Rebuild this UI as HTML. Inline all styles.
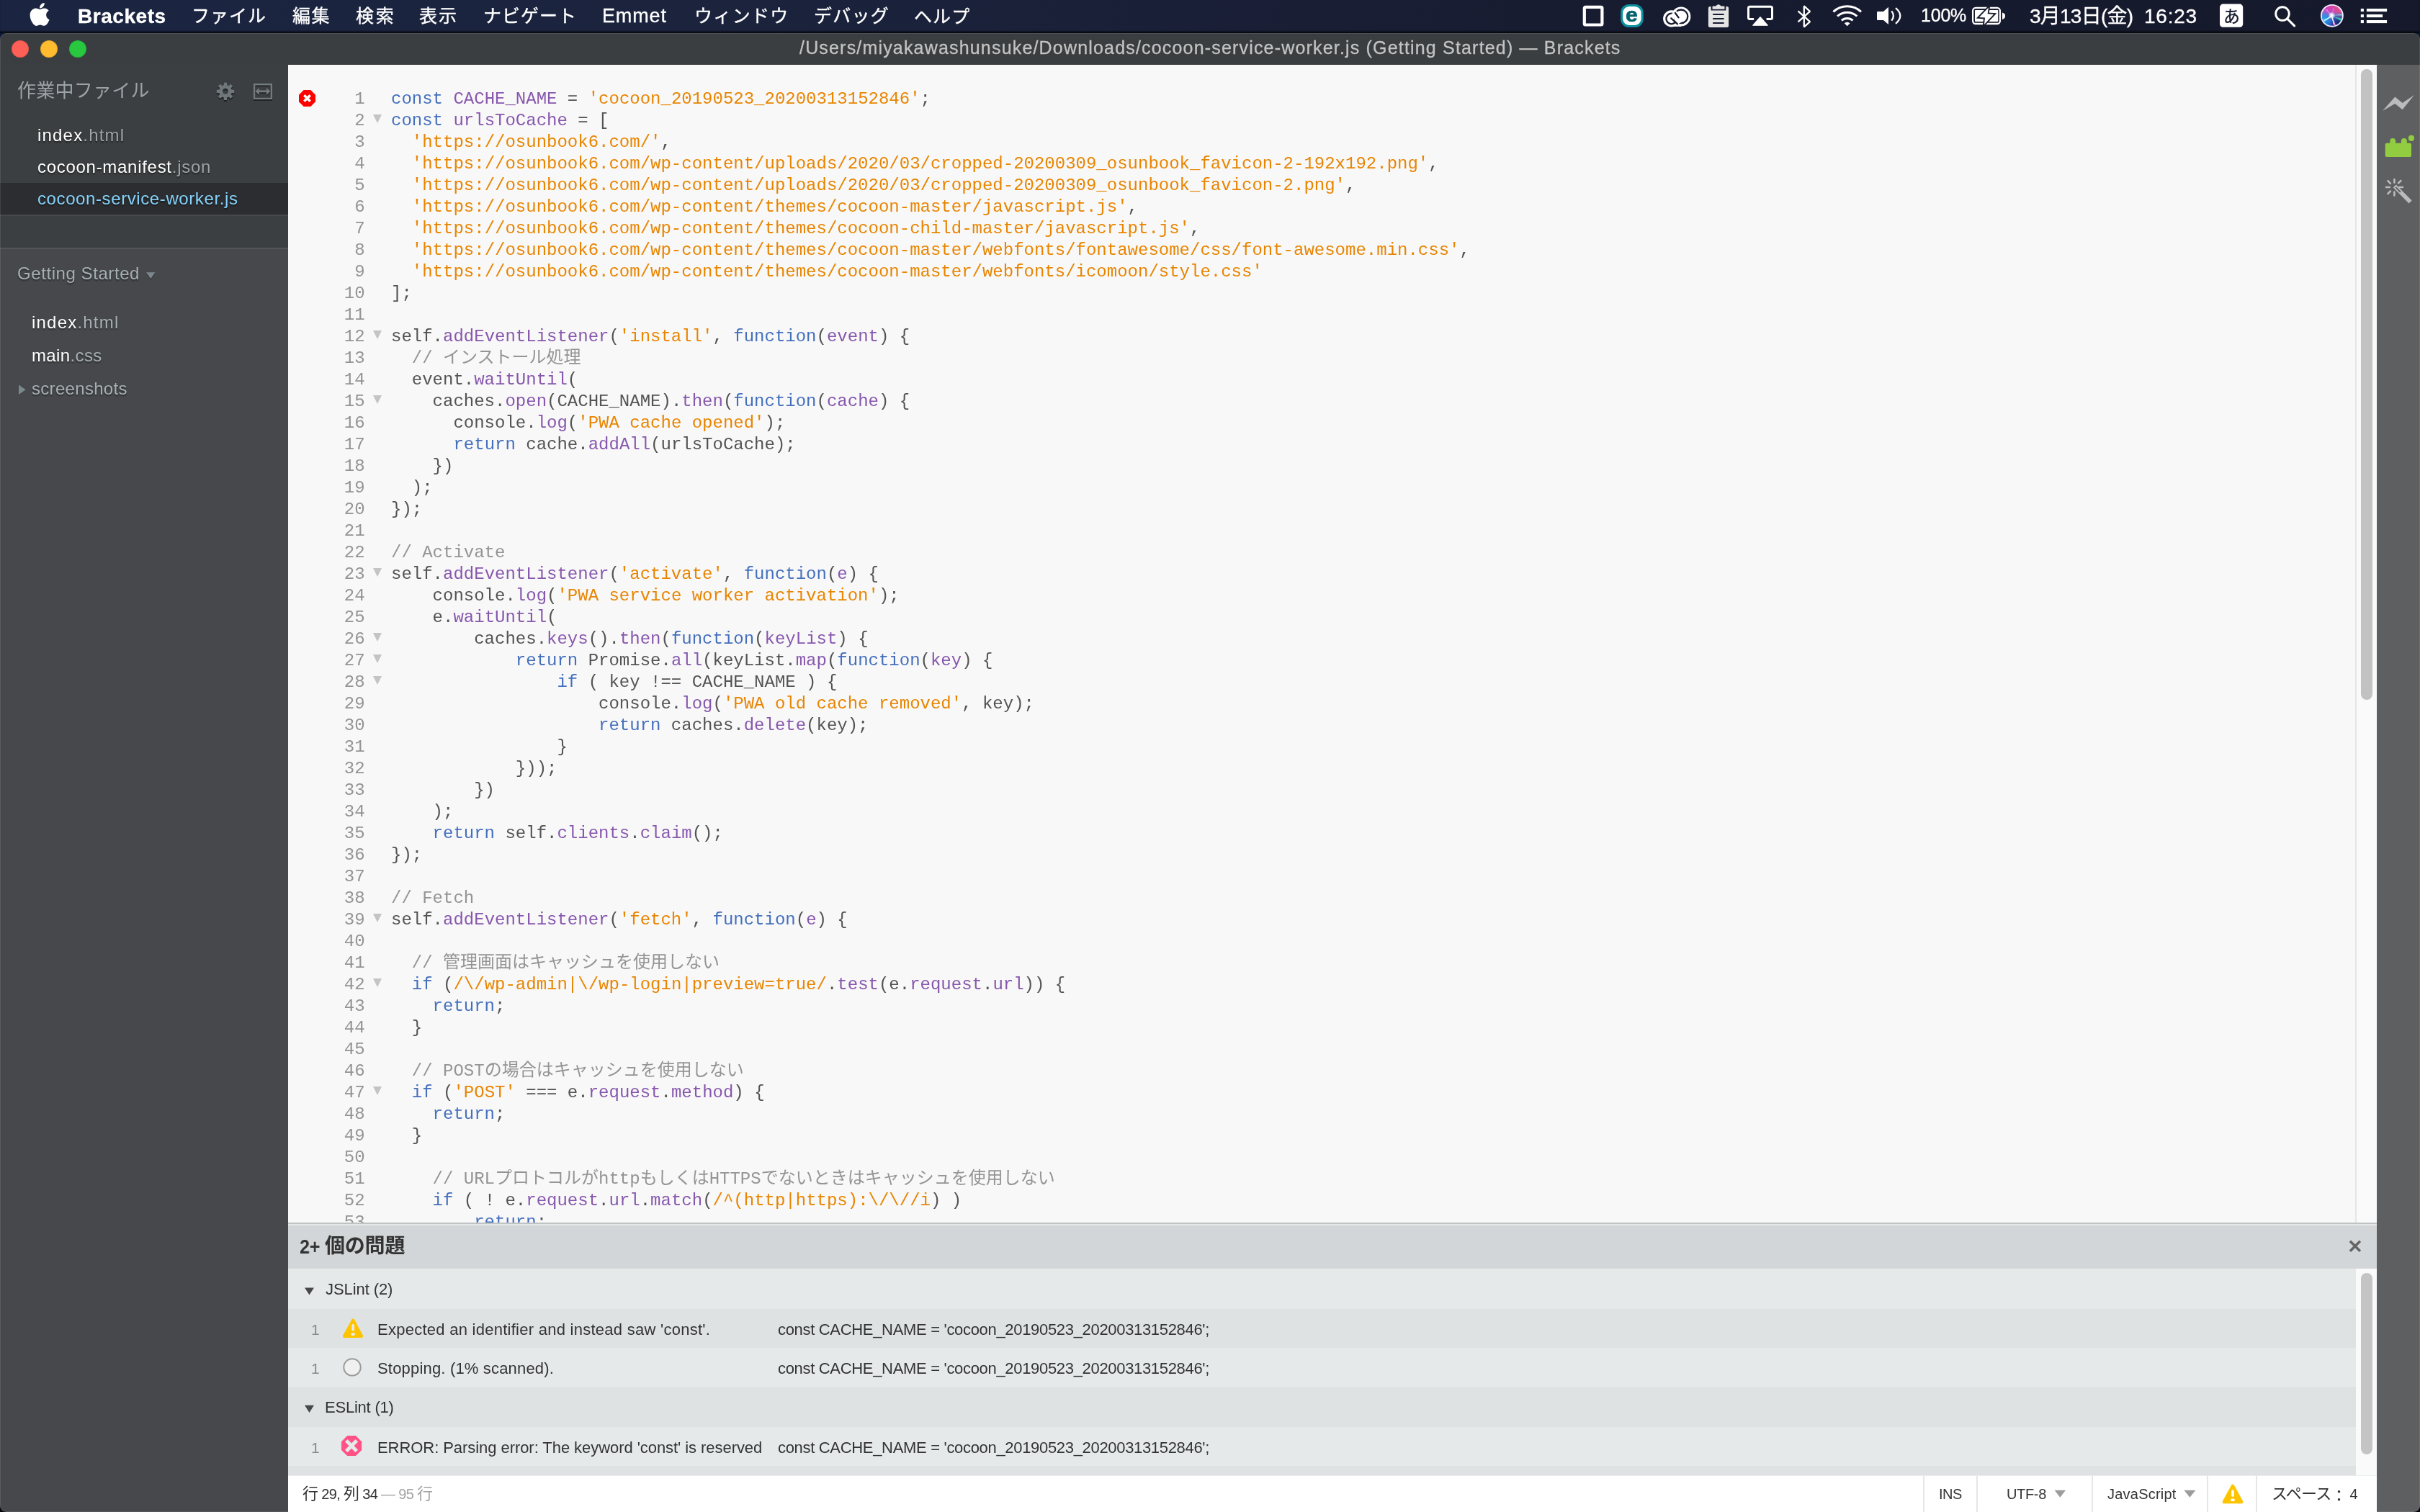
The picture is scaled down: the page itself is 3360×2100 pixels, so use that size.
<!DOCTYPE html>
<html lang="ja">
<head>
<meta charset="utf-8">
<title>Brackets</title>
<style>
html,body{margin:0;padding:0;}
body{width:3360px;height:2100px;overflow:hidden;position:relative;background:linear-gradient(to bottom,#0b1a3a 0%,#0a1630 40%,#05070c 100%);font-family:"Liberation Sans","Noto Sans CJK JP",sans-serif;}
.abs,#win>div,#win>svg,#menubar>svg{position:absolute;}
.t{position:absolute;white-space:pre;line-height:1;}
.t,.code{will-change:transform;}
#menubar{position:absolute;left:0;top:0;width:3360px;height:45px;box-shadow:inset 0 -2px 1.5px rgba(0,0,0,.45);background:linear-gradient(to right,#1b2541 0%,#1b233d 30%,#181c31 65%,#15192b 100%);}
#menuline{position:absolute;left:0;top:45px;width:3360px;height:1px;background:#05070d;}
#win{position:absolute;left:0;top:0;width:3360px;height:2100px;clip-path:inset(46px 0px 0px 0px round 9px);background:#3b3e41;}
#titlebar{left:0;top:46px;width:3360px;height:44px;background:#3b3e41;}
#ws{left:0;top:90px;width:400px;height:254px;background:#3c3f41;}
#wssel{left:0;top:254px;width:400px;height:44px;background:#2c2d30;}
#proj{left:0;top:344px;width:400px;height:1756px;background:#47484b;border-top:2px solid #525457;box-sizing:border-box;}
#editor{left:400px;top:90px;width:2900px;height:1608px;background:#f8f8f8;overflow:hidden;}
#toolbar{left:3300px;top:90px;width:60px;height:2010px;background:#5d5f60;}
#edborder{left:400px;top:1698px;width:2900px;height:2px;background:#c0c3c4;}
#edborder2{left:400px;top:1700px;width:2900px;height:2px;background:#e6e8e8;}
#phead{left:400px;top:1702px;width:2900px;height:60px;background:#d3d6d8;}
#status{left:400px;top:2049px;width:2900px;height:51px;background:#ffffff;}
.row{left:400px;width:2871px;}
.code{font-family:"Liberation Mono","Noto Sans CJK JP",monospace;font-size:24px;line-height:30px;white-space:pre;color:#535353;}
.k{color:#446fbd}.d{color:#8757ad}.s{color:#e88501}.c{color:#949494}
#winborder{left:0;top:46px;width:3360px;height:2054px;border-radius:9px;box-shadow:inset 0 0 0 1px rgba(255,255,255,.10);}
</style>
</head>
<body>
<div id="menubar">
<svg width="3360" height="46" viewBox="0 0 3360 46" style="left:0;top:0" fill="none">
<!-- apple -->
<g transform="translate(38.3,3.1) scale(0.1975)" fill="#fff"><path d="M150.37 130.25c-2.45 5.66-5.35 10.87-8.71 15.66-4.58 6.53-8.33 11.05-11.22 13.56-4.48 4.12-9.28 6.23-14.42 6.35-3.69 0-8.14-1.05-13.32-3.18-5.197-2.12-9.973-3.17-14.34-3.17-4.58 0-9.492 1.05-14.746 3.17-5.262 2.13-9.501 3.24-12.742 3.35-4.929 0.21-9.842-1.96-14.746-6.52-3.13-2.73-7.045-7.41-11.735-14.04-5.032-7.08-9.169-15.29-12.41-24.65-3.471-10.11-5.211-19.9-5.211-29.378 0-10.857 2.346-20.221 7.045-28.068 3.693-6.303 8.606-11.275 14.755-14.925s12.793-5.51 19.948-5.629c3.915 0 9.049 1.211 15.429 3.591 6.362 2.388 10.447 3.599 12.238 3.599 1.339 0 5.877-1.416 13.57-4.239 7.275-2.618 13.415-3.702 18.445-3.275 13.63 1.1 23.87 6.473 30.68 16.153-12.19 7.386-18.22 17.731-18.1 31.002 0.11 10.337 3.86 18.939 11.23 25.769 3.34 3.17 7.07 5.62 11.22 7.36-0.9 2.61-1.85 5.11-2.86 7.51zM119.11 7.24c0 8.102-2.96 15.667-8.86 22.669-7.12 8.324-15.732 13.134-25.071 12.375-0.119-0.972-0.188-1.995-0.188-3.07 0-7.778 3.386-16.102 9.399-22.908 3.002-3.446 6.82-6.311 11.45-8.597 4.62-2.252 8.99-3.497 13.1-3.71 0.12 1.083 0.17 2.166 0.17 3.24z"/></g>
<!-- square -->
<rect x="2199.8" y="9.8" width="24.6" height="24.7" rx="1.5" stroke="#fff" stroke-width="4.2"/>
<!-- eset -->
<rect x="2250.1" y="6" width="31.6" height="32" rx="11.5" fill="#0a8f9c"/>
<rect x="2253.1" y="9" width="25.6" height="26" rx="9" fill="#fff"/>
<!-- creative cloud -->
<g>
<circle cx="2320.7" cy="25.9" r="11.6" fill="#fff"/><circle cx="2334" cy="23" r="13.4" fill="#fff"/><rect x="2320" y="30" width="14" height="6.9" fill="#fff"/>
<circle cx="2320.7" cy="26" r="7.3" stroke="#181c31" stroke-width="2.3"/>
<circle cx="2334" cy="22.8" r="9.3" stroke="#181c31" stroke-width="2.3"/>
<path d="M2324.2 17.2 L2332.6 31.8" stroke="#fff" stroke-width="8.6"/>
<path d="M2320.3 25.4 L2329 33.4 M2325.9 18 L2330.6 24.4" stroke="#181c31" stroke-width="2.3" stroke-linecap="round"/>
</g>
<!-- clipboard -->
<rect x="2371.9" y="8.9" width="28.2" height="29" rx="2.5" fill="#e4e4e4"/>
<path d="M2377.8 12.6 V8.6 H2382.3 Q2385.9 4 2389.6 8.6 H2394 V12.6 Z" fill="#e4e4e4" stroke="#181c31" stroke-width="0"/>
<path d="M2376.6 9 V13.6 H2395.4 V9" stroke="#181c31" stroke-width="1.9"/>
<path d="M2378.2 20.1 H2393.6 M2378.2 26 H2393.6 M2378.2 32 H2393.6" stroke="#181c31" stroke-width="2"/>
<!-- airplay -->
<path d="M2435.1 26.6 H2429.5 Q2427.5 26.6 2427.5 24.6 V11.3 Q2427.5 9.3 2429.5 9.3 H2458.5 Q2460.5 9.3 2460.5 11.3 V24.6 Q2460.5 26.6 2458.5 26.6 H2452.6" stroke="#fff" stroke-width="3"/>
<path d="M2444 23.6 L2454.2 35.2 H2433.8 Z" fill="#fff" stroke="#fff" stroke-width="1.2" stroke-linejoin="round"/>
<!-- bluetooth -->
<path d="M2496.5 15.4 L2513 30.2 L2504.8 37.4 V8.4 L2513 15.9 L2496.5 30.4" stroke="#fff" stroke-width="2.3" stroke-linejoin="bevel"/>
<!-- wifi -->
<g stroke="#fff" stroke-width="3">
<path d="M2545.4 16.4 A28.3 28.3 0 0 1 2584 16.4"/>
<path d="M2551.1 22.5 A20 20 0 0 1 2578.3 22.5"/>
<path d="M2556.8 28.4 A12 12 0 0 1 2572.6 28.4"/>
</g>
<path d="M2564.7 36.3 L2560.8 32.3 A5.6 5.6 0 0 1 2568.6 32.3 Z" fill="#fff"/>
<!-- volume -->
<path d="M2606 17 Q2606 16 2607 16 H2615 L2622 9.7 V33.9 L2615 27.9 H2607 Q2606 27.9 2606 26.9 Z" fill="#fff"/>
<path d="M2626.3 15.4 Q2631.5 22 2626.3 28.6 M2632 11.2 Q2644.6 22 2632 32.8" stroke="#fff" stroke-width="2.3"/>
<!-- battery -->
<rect x="2739.1" y="10.9" width="37.8" height="22.1" rx="4" stroke="#fff" stroke-width="2.3"/>
<rect x="2742" y="13.9" width="32.2" height="16.2" rx="0.8" fill="#fff"/>
<path d="M2780 17.4 Q2784.4 18.4 2784 22.1 Q2784.4 25.9 2780 26.9 Z" fill="#fff"/>
<path d="M2760.9 10.6 L2748 24 L2756 24.6 L2755 33.9 L2768.2 19.8 L2759.6 19.3 Z" fill="#fff" stroke="#171b2f" stroke-width="3.8" paint-order="stroke" stroke-linejoin="miter"/>
<!-- a box -->
<rect x="3082" y="5.6" width="32.2" height="32.2" rx="4.5" fill="#fff"/>
<!-- search -->
<circle cx="3169" cy="19.1" r="9.3" stroke="#fff" stroke-width="2.9"/>
<path d="M3175.6 25.8 L3185.6 35.8" stroke="#fff" stroke-width="3.1" stroke-linecap="round"/>
<!-- siri -->
<defs>
<linearGradient id="sgA" x1="0.35" y1="0" x2="0.55" y2="1"><stop offset="0" stop-color="#e23ca6"/><stop offset="0.32" stop-color="#b44fc8"/><stop offset="0.55" stop-color="#5468d6"/><stop offset="0.8" stop-color="#2f6fd6"/><stop offset="1" stop-color="#2458c4"/></linearGradient>
<radialGradient id="sgB" cx="0.86" cy="0.2" r="0.45"><stop offset="0" stop-color="#e8507c"/><stop offset="1" stop-color="#e8507c" stop-opacity="0"/></radialGradient>
<radialGradient id="sgC" cx="0.8" cy="0.85" r="0.42"><stop offset="0" stop-color="#141c58"/><stop offset="1" stop-color="#141c58" stop-opacity="0"/></radialGradient>
<radialGradient id="sgD" cx="0.1" cy="0.62" r="0.4"><stop offset="0" stop-color="#18a6e8"/><stop offset="1" stop-color="#18a6e8" stop-opacity="0"/></radialGradient>
<radialGradient id="sgW" cx="0.5" cy="0.5" r="0.5"><stop offset="0" stop-color="#fff"/><stop offset="0.35" stop-color="#fff" stop-opacity="0.85"/><stop offset="1" stop-color="#dff" stop-opacity="0"/></radialGradient>
<filter id="sbl" x="-20%" y="-20%" width="140%" height="140%"><feGaussianBlur stdDeviation="0.7"/></filter>
<clipPath id="sc"><circle cx="3237.9" cy="21.8" r="14"/></clipPath>
</defs>
<circle cx="3237.9" cy="21.8" r="15.9" fill="#efecfd"/>
<circle cx="3237.9" cy="21.8" r="14" fill="url(#sgA)"/>
<g clip-path="url(#sc)">
<rect x="3222" y="6" width="32" height="32" fill="url(#sgB)"/>
<rect x="3222" y="6" width="32" height="32" fill="url(#sgC)"/>
<rect x="3222" y="6" width="32" height="32" fill="url(#sgD)"/>
<g filter="url(#sbl)">
<path d="M3238 21.2 L3252.5 19.4 L3252.8 21.4 Z" fill="#5ff0e6" opacity="0.85"/>
<path d="M3240 23 L3251.8 25.8 L3250 29 Z" fill="#38e6a4" opacity="0.8"/>
<path d="M3236.6 21 L3228 13.6 L3231.4 13 Z" fill="#e873e0"/>
<path d="M3237.6 20.6 L3239.4 11.6 L3241.4 12.2 Z" fill="#f560c4"/>
<path d="M3237 22 L3240.6 35.6 L3243 34.4 Z" fill="#f77fd6"/>
<path d="M3237.6 22.4 L3225.6 27.6 L3227.4 30 Z" fill="#8ff4ff"/>
<path d="M3226.6 29.4 L3237.3 20.8 L3238.4 22.2 Z" fill="#fff"/>
<path d="M3238 21 L3241.2 33.6 L3240 34 L3236.6 21.6 Z" fill="#fff" opacity="0.9"/>
<path d="M3233 17.2 L3238 20.6 L3237 22 Z" fill="#fff" opacity="0.8"/>
</g>
<circle cx="3237.6" cy="21.4" r="5.2" fill="url(#sgW)"/>
</g>
<!-- list -->
<g fill="#fff">
<rect x="3277.8" y="12" width="4.1" height="4.1"/><rect x="3285.9" y="12" width="28.2" height="4.1"/>
<rect x="3277.8" y="20" width="4.1" height="4.1"/><rect x="3285.9" y="20" width="22.2" height="4.1"/>
<rect x="3277.8" y="28" width="4.1" height="4.1"/><rect x="3285.9" y="28" width="28.2" height="4.1"/>
</g>
</svg>

<div class="t" style="left:107.6px;top:8.7px;font-family:'Liberation Sans','Noto Sans CJK JP',sans-serif;font-size:28px;font-weight:bold;color:#fff;letter-spacing:0.54px;-webkit-text-stroke:0.35px #fff;">Brackets</div>
<div class="t" style="left:266.0px;top:9.7px;font-family:'Liberation Sans','Noto Sans CJK JP',sans-serif;font-size:25px;font-weight:normal;color:#fff;letter-spacing:1.00px;-webkit-text-stroke:0.35px #fff;">ファイル</div>
<div class="t" style="left:406.4px;top:9.8px;font-family:'Liberation Sans','Noto Sans CJK JP',sans-serif;font-size:25px;font-weight:normal;color:#fff;letter-spacing:1.60px;-webkit-text-stroke:0.35px #fff;">編集</div>
<div class="t" style="left:493.6px;top:9.8px;font-family:'Liberation Sans','Noto Sans CJK JP',sans-serif;font-size:25px;font-weight:normal;color:#fff;letter-spacing:2.70px;-webkit-text-stroke:0.35px #fff;">検索</div>
<div class="t" style="left:581.9px;top:9.8px;font-family:'Liberation Sans','Noto Sans CJK JP',sans-serif;font-size:25px;font-weight:normal;color:#fff;letter-spacing:2.10px;-webkit-text-stroke:0.35px #fff;">表示</div>
<div class="t" style="left:670.5px;top:9.7px;font-family:'Liberation Sans','Noto Sans CJK JP',sans-serif;font-size:25px;font-weight:normal;color:#fff;letter-spacing:1.00px;-webkit-text-stroke:0.35px #fff;">ナビゲート</div>
<div class="t" style="left:836.4px;top:9.4px;font-family:'Liberation Sans','Noto Sans CJK JP',sans-serif;font-size:27px;font-weight:normal;color:#fff;letter-spacing:0.85px;-webkit-text-stroke:0.35px #fff;">Emmet</div>
<div class="t" style="left:963.7px;top:9.7px;font-family:'Liberation Sans','Noto Sans CJK JP',sans-serif;font-size:25px;font-weight:normal;color:#fff;letter-spacing:1.32px;-webkit-text-stroke:0.35px #fff;">ウィンドウ</div>
<div class="t" style="left:1129.6px;top:9.7px;font-family:'Liberation Sans','Noto Sans CJK JP',sans-serif;font-size:25px;font-weight:normal;color:#fff;letter-spacing:1.23px;-webkit-text-stroke:0.35px #fff;">デバッグ</div>
<div class="t" style="left:1269.3px;top:10.7px;font-family:'Liberation Sans','Noto Sans CJK JP',sans-serif;font-size:25px;font-weight:normal;color:#fff;letter-spacing:1.10px;-webkit-text-stroke:0.35px #fff;">ヘルプ</div>
<div class="t" style="left:2666.7px;top:9.1px;font-family:'Liberation Sans','Noto Sans CJK JP',sans-serif;font-size:25px;font-weight:normal;color:#fff;letter-spacing:-0.20px;-webkit-text-stroke:0.35px #fff;">100%</div>
<div class="t" style="left:2817.5px;top:8.8px;font-family:'Liberation Sans','Noto Sans CJK JP',sans-serif;font-size:28px;font-weight:normal;color:#fff;letter-spacing:-0.76px;-webkit-text-stroke:0.35px #fff;">3月13日(金)</div>
<div class="t" style="left:2976.8px;top:8.8px;font-family:'Liberation Sans','Noto Sans CJK JP',sans-serif;font-size:28px;font-weight:normal;color:#fff;letter-spacing:0.75px;-webkit-text-stroke:0.35px #fff;">16:23</div>
<div class="t" style="left:3086.5px;top:11.8px;font-family:'Liberation Sans','Noto Sans CJK JP',sans-serif;font-size:23px;font-weight:500;color:#1b1f33;letter-spacing:0.00px;">あ</div>
<div class="t" style="left:2257.3px;top:6.6px;font-family:'Liberation Sans','Noto Sans CJK JP',sans-serif;font-size:28px;font-weight:bold;color:#05626d;letter-spacing:0.00px;-webkit-text-stroke:0.7px #05626d;transform:scaleX(1.08);transform-origin:0 0;">e</div>
</div>
<div id="menuline"></div>
<div id="win">
<div id="titlebar"></div>
<div style="left:16px;top:56px;width:24px;height:24px;border-radius:50%;background:#fe5f57;box-shadow:inset 0 0 0 1px rgba(0,0,0,.10)"></div>
<div style="left:56px;top:56px;width:24px;height:24px;border-radius:50%;background:#febc2e;box-shadow:inset 0 0 0 1px rgba(0,0,0,.10)"></div>
<div style="left:96px;top:56px;width:24px;height:24px;border-radius:50%;background:#28c840;box-shadow:inset 0 0 0 1px rgba(0,0,0,.10)"></div>
<div id="ws"></div>
<div id="wssel"></div>
<div style="left:0;top:298px;width:400px;height:2px;background:#46484a"></div>
<div id="proj"></div>
<div id="toolbar"></div>
<div id="edborder"></div>
<div id="edborder2"></div>
<div id="phead"></div>
<div class="row" style="top:1762px;height:56px;background:#e6e9ea"></div>
<div class="row" style="top:1818px;height:54px;background:#dfe2e3"></div>
<div class="row" style="top:1872px;height:54px;background:#e6e9ea"></div>
<div class="row" style="top:1926px;height:56px;background:#dfe2e3"></div>
<div class="row" style="top:1982px;height:54px;background:#e6e9ea"></div>
<div class="row" style="top:2036px;height:13px;background:#dfe2e3"></div>
<div style="left:3271px;top:1762px;width:29px;height:287px;background:#fafafa"></div>
<div style="left:3278px;top:1768px;width:16px;height:252px;border-radius:8px;background:#c4c4c4"></div>
<div id="status"></div>
<div style="left:400px;top:2049px;width:2900px;height:1px;background:#eceded"></div>
<div style="left:2670px;top:2050px;width:2px;height:50px;background:#e6e6e6"></div>
<div style="left:2744px;top:2050px;width:2px;height:50px;background:#e6e6e6"></div>
<div style="left:2904px;top:2050px;width:2px;height:50px;background:#e6e6e6"></div>
<div style="left:3064px;top:2050px;width:2px;height:50px;background:#e6e6e6"></div>
<div style="left:3132px;top:2050px;width:2px;height:50px;background:#e6e6e6"></div>
<div id="editor">
<div class="code abs" style="left:142.5px;top:32.6px"><span class=k>const</span> <span class=d>CACHE_NAME</span> = <span class=s>&#39;cocoon_20190523_20200313152846&#39;</span>;
<span class=k>const</span> <span class=d>urlsToCache</span> = [
  <span class=s>&#39;https://osunbook6.com/&#39;</span>,
  <span class=s>&#39;https://osunbook6.com/wp-content/uploads/2020/03/cropped-20200309_osunbook_favicon-2-192x192.png&#39;</span>,
  <span class=s>&#39;https://osunbook6.com/wp-content/uploads/2020/03/cropped-20200309_osunbook_favicon-2.png&#39;</span>,
  <span class=s>&#39;https://osunbook6.com/wp-content/themes/cocoon-master/javascript.js&#39;</span>,
  <span class=s>&#39;https://osunbook6.com/wp-content/themes/cocoon-child-master/javascript.js&#39;</span>,
  <span class=s>&#39;https://osunbook6.com/wp-content/themes/cocoon-master/webfonts/fontawesome/css/font-awesome.min.css&#39;</span>,
  <span class=s>&#39;https://osunbook6.com/wp-content/themes/cocoon-master/webfonts/icomoon/style.css&#39;</span>
];

self.<span class=d>addEventListener</span>(<span class=s>&#39;install&#39;</span>, <span class=k>function</span>(<span class=d>event</span>) {
  <span class=c>// インストール処理</span>
  event.<span class=d>waitUntil</span>(
    caches.<span class=d>open</span>(CACHE_NAME).<span class=d>then</span>(<span class=k>function</span>(<span class=d>cache</span>) {
      console.<span class=d>log</span>(<span class=s>&#39;PWA cache opened&#39;</span>);
      <span class=k>return</span> cache.<span class=d>addAll</span>(urlsToCache);
    })
  );
});

<span class=c>// Activate</span>
self.<span class=d>addEventListener</span>(<span class=s>&#39;activate&#39;</span>, <span class=k>function</span>(<span class=d>e</span>) {
    console.<span class=d>log</span>(<span class=s>&#39;PWA service worker activation&#39;</span>);
    e.<span class=d>waitUntil</span>(
        caches.<span class=d>keys</span>().<span class=d>then</span>(<span class=k>function</span>(<span class=d>keyList</span>) {
            <span class=k>return</span> Promise.<span class=d>all</span>(keyList.<span class=d>map</span>(<span class=k>function</span>(<span class=d>key</span>) {
                <span class=k>if</span> ( key !== CACHE_NAME ) {
                    console.<span class=d>log</span>(<span class=s>&#39;PWA old cache removed&#39;</span>, key);
                    <span class=k>return</span> caches.<span class=d>delete</span>(key);
                }
            }));
        })
    );
    <span class=k>return</span> self.<span class=d>clients</span>.<span class=d>claim</span>();
});

<span class=c>// Fetch</span>
self.<span class=d>addEventListener</span>(<span class=s>&#39;fetch&#39;</span>, <span class=k>function</span>(<span class=d>e</span>) {

  <span class=c>// 管理画面はキャッシュを使用しない</span>
  <span class=k>if</span> (<span class=s>/\/wp-admin|\/wp-login|preview=true/</span>.<span class=d>test</span>(e.<span class=d>request</span>.<span class=d>url</span>)) {
    <span class=k>return</span>;
  }

  <span class=c>// POSTの場合はキャッシュを使用しない</span>
  <span class=k>if</span> (<span class=s>&#39;POST&#39;</span> === e.<span class=d>request</span>.<span class=d>method</span>) {
    <span class=k>return</span>;
  }

    <span class=c>// URLプロトコルがhttpもしくはHTTPSでないときはキャッシュを使用しない</span>
    <span class=k>if</span> ( ! e.<span class=d>request</span>.<span class=d>url</span>.<span class=d>match</span>(<span class=s>/^(http|https):\/\//i</span>) )
        <span class=k>return</span>;</div>
<div class="code abs" style="left:0;width:106.6px;top:32.6px;text-align:right;color:#949494">1
2
3
4
5
6
7
8
9
10
11
12
13
14
15
16
17
18
19
20
21
22
23
24
25
26
27
28
29
30
31
32
33
34
35
36
37
38
39
40
41
42
43
44
45
46
47
48
49
50
51
52
53</div>
<div class="abs" style="left:117.7px;top:69.0px;width:0;height:0;border-left:6.3px solid transparent;border-right:6.3px solid transparent;border-top:12.4px solid #c4c4c4"></div><div class="abs" style="left:117.7px;top:369.0px;width:0;height:0;border-left:6.3px solid transparent;border-right:6.3px solid transparent;border-top:12.4px solid #c4c4c4"></div><div class="abs" style="left:117.7px;top:459.0px;width:0;height:0;border-left:6.3px solid transparent;border-right:6.3px solid transparent;border-top:12.4px solid #c4c4c4"></div><div class="abs" style="left:117.7px;top:699.0px;width:0;height:0;border-left:6.3px solid transparent;border-right:6.3px solid transparent;border-top:12.4px solid #c4c4c4"></div><div class="abs" style="left:117.7px;top:789.0px;width:0;height:0;border-left:6.3px solid transparent;border-right:6.3px solid transparent;border-top:12.4px solid #c4c4c4"></div><div class="abs" style="left:117.7px;top:819.0px;width:0;height:0;border-left:6.3px solid transparent;border-right:6.3px solid transparent;border-top:12.4px solid #c4c4c4"></div><div class="abs" style="left:117.7px;top:849.0px;width:0;height:0;border-left:6.3px solid transparent;border-right:6.3px solid transparent;border-top:12.4px solid #c4c4c4"></div><div class="abs" style="left:117.7px;top:1179.0px;width:0;height:0;border-left:6.3px solid transparent;border-right:6.3px solid transparent;border-top:12.4px solid #c4c4c4"></div><div class="abs" style="left:117.7px;top:1269.0px;width:0;height:0;border-left:6.3px solid transparent;border-right:6.3px solid transparent;border-top:12.4px solid #c4c4c4"></div><div class="abs" style="left:117.7px;top:1419.0px;width:0;height:0;border-left:6.3px solid transparent;border-right:6.3px solid transparent;border-top:12.4px solid #c4c4c4"></div>
<svg class="abs" style="left:14.600000000000023px;top:34.599999999999994px" width="23" height="23" viewBox="0 0 23 23"><polygon points="6.7,0 16.3,0 23,6.7 23,16.3 16.3,23 6.7,23 0,16.3 0,6.7" fill="#f00"/><path d="M7.3 7.3 L15.7 15.7 M15.7 7.3 L7.3 15.7" stroke="#fff" stroke-width="3.4"/></svg>
<div class="abs" style="left:2870px;top:0;width:2px;height:1609px;background:#e5e5e5"></div><div class="abs" style="left:2872px;top:0;width:28px;height:1609px;background:#fafafa"></div><div class="abs" style="left:2878px;top:6px;width:16px;height:876px;border-radius:8px;background:#c2c2c2"></div>
</div>
<svg width="3360" height="2100" viewBox="0 0 3360 2100" style="left:0;top:0" fill="none">
<path d="M310.70 118.30 L311.00 114.70 L315.00 114.70 L315.30 118.30 L317.45 119.19 L320.21 116.86 L323.04 119.69 L320.71 122.45 L321.60 124.60 L325.20 124.90 L325.20 128.90 L321.60 129.20 L320.71 131.35 L323.04 134.11 L320.21 136.94 L317.45 134.61 L315.30 135.50 L315.00 139.10 L311.00 139.10 L310.70 135.50 L308.55 134.61 L305.79 136.94 L302.96 134.11 L305.29 131.35 L304.40 129.20 L300.80 128.90 L300.80 124.90 L304.40 124.60 L305.29 122.45 L302.96 119.69 L305.79 116.86 L308.55 119.19 Z M309.4 126.9 a3.6 3.6 0 1 0 7.2 0 a3.6 3.6 0 1 0 -7.2 0 Z" fill="#1d1f20" fill-rule="evenodd" transform="translate(0,2)"/>
<path d="M310.70 118.30 L311.00 114.70 L315.00 114.70 L315.30 118.30 L317.45 119.19 L320.21 116.86 L323.04 119.69 L320.71 122.45 L321.60 124.60 L325.20 124.90 L325.20 128.90 L321.60 129.20 L320.71 131.35 L323.04 134.11 L320.21 136.94 L317.45 134.61 L315.30 135.50 L315.00 139.10 L311.00 139.10 L310.70 135.50 L308.55 134.61 L305.79 136.94 L302.96 134.11 L305.29 131.35 L304.40 129.20 L300.80 128.90 L300.80 124.90 L304.40 124.60 L305.29 122.45 L302.96 119.69 L305.79 116.86 L308.55 119.19 Z M309.4 126.9 a3.6 3.6 0 1 0 7.2 0 a3.6 3.6 0 1 0 -7.2 0 Z" fill="#6f777a" fill-rule="evenodd"/>
<path d="M309.4 126.4 a3.6 3.6 0 0 1 7.2 0 a3.9 3 0 0 0 -7.2 0 Z" fill="#2a2c2e"/>
<rect x="353" y="118.8" width="23.9" height="20" stroke="#1f2122" stroke-width="2.2"/>
<rect x="353" y="117.1" width="23.9" height="19.8" stroke="#737b7e" stroke-width="2.2" fill="#3c3f41"/>
<path d="M355.2 119.6 H374.8" stroke="#2a2c2e" stroke-width="1.6"/>
<path d="M354.5 128.4 L359.8 123.4 V127.1 H370 V123.4 L375.3 128.4 L370 133.4 V129.8 H359.8 V133.4 Z" fill="#1f2122"/>
<path d="M354.5 126.9 L359.8 121.9 V125.6 H370 V121.9 L375.3 126.9 L370 131.9 V128.3 H359.8 V131.9 Z" fill="#737b7e"/>
<path d="M203 378.2 H215.5 L209.25 387.2 Z" fill="#2e2f31" transform="translate(0,1.6)"/>
<path d="M203 378.2 H215.5 L209.25 387.2 Z" fill="#7b898c"/>
<path d="M26 534.5 L35.6 541.3 L26 548.1 Z" fill="#7b898c"/>
<path d="M3308 153.9 L3325.3 134.5 L3335.6 143 L3352 132 L3335.6 152.3 L3325.3 144 Z" fill="#bbbbbb"/>
<g fill="#91cc41"><rect x="3311.7" y="198.7" width="36.3" height="19.3" rx="2"/><path d="M3318.3 199 V195.9 a3.9 3.9 0 0 1 7.8 0 V199 Z M3333.9 199 V195.9 a3.95 3.95 0 0 1 7.9 0 V199 Z"/><circle cx="3348" cy="191.9" r="4.1"/></g>
<g stroke="#bbbbbb" stroke-width="2.6" stroke-linecap="round"><path d="M3324.4 249 V253.6 M3324.4 266.6 V271.4 M3313 260 H3317.8 M3331.4 260 H3336 M3315.4 251.2 L3319 254.8 M3333.4 251 L3330 254.4 M3315.4 269 L3319 265.4"/></g>
<path d="M3322.8 260.6 L3326.8 256.6 L3348.6 278.6 L3344.6 282.6 Z" fill="#bbbbbb"/>
<path d="M3325.6 260.8 L3327 259.4 L3333.6 266 L3332.2 267.4 Z" fill="#5d5f60"/>
<path d="M3262.9 1723.7 L3276.9 1737.8 M3276.9 1723.7 L3262.9 1737.8" stroke="#646464" stroke-width="3.5"/>
<path d="M423 1788.4 H436 L429.5 1798.6 Z M423 1951.8 H436 L429.5 1962 Z" fill="#484848"/>
<path d="M490.2 1833.8 L501.90000000000003 1855.8999999999999 L478.09999999999997 1855.8999999999999 Z" fill="#ffc400" stroke="#ffc400" stroke-width="4.4" stroke-linejoin="round"/>
<rect x="488.4" y="1839" width="3.6" height="9.6" rx="1.6" fill="#e8eaee"/><rect x="487.3" y="1851.3" width="5.6" height="3.6" rx="1.6" fill="#e8eaee"/>
<circle cx="489" cy="1898.9" r="11.7" fill="#eff0f0" stroke="#9a9a9a" stroke-width="2"/>
<polygon points="482.2,1994 493.90000000000003,1994 502.1,2002.2 502.1,2013.8999999999999 493.90000000000003,2022.1 482.2,2022.1 474,2013.8999999999999 474,2002.2" fill="#ff5286"/>
<path d="M480.8 2000.7 L495.3 2015.4 M495.3 2000.7 L480.8 2015.4" stroke="#e6e9ea" stroke-width="5"/>
<path d="M2852.6 2069.8 H2868 L2860.3 2079.8 Z M3032.4 2069.8 H3048.4 L3040.4 2079.8 Z" fill="#9c9c9c"/>
<path d="M3100 2063.8999999999996 L3112.2000000000003 2086.0 L3087.7999999999997 2086.0 Z" fill="#ffc400" stroke="#ffc400" stroke-width="4.4" stroke-linejoin="round"/>
<rect x="3098.2" y="2069.2" width="3.6" height="9.6" rx="1.6" fill="#fff"/><rect x="3097.2" y="2081.4" width="5.6" height="3.6" rx="1.6" fill="#fff"/>
</svg>
<div class="t" style="left:1110.2px;top:54.4px;font-family:'Liberation Sans','Noto Sans CJK JP',sans-serif;font-size:25px;font-weight:normal;color:#c3c3c3;letter-spacing:1.18px;-webkit-text-stroke:0.3px #c3c3c3;">/Users/miyakawashunsuke/Downloads/cocoon-service-worker.js (Getting Started) — Brackets</div>
<div class="t" style="left:23.8px;top:113.4px;font-family:'Liberation Sans','Noto Sans CJK JP',sans-serif;font-size:26px;font-weight:normal;color:#9ba3a6;letter-spacing:0.27px;">作業中ファイル</div>
<div class="t" style="left:51.6px;top:175.8px;font-family:'Liberation Sans','Noto Sans CJK JP',sans-serif;font-size:24px;font-weight:normal;color:#ffffff;letter-spacing:1.19px;text-shadow:0 2px 2px rgba(0,0,0,.45);">index<span style='color:#9ba3a6'>.html</span></div>
<div class="t" style="left:51.6px;top:220.1px;font-family:'Liberation Sans','Noto Sans CJK JP',sans-serif;font-size:24px;font-weight:normal;color:#ffffff;letter-spacing:0.71px;text-shadow:0 2px 2px rgba(0,0,0,.45);">cocoon-manifest<span style='color:#9ba3a6'>.json</span></div>
<div class="t" style="left:51.6px;top:263.5px;font-family:'Liberation Sans','Noto Sans CJK JP',sans-serif;font-size:24px;font-weight:normal;color:#86d3fb;letter-spacing:0.60px;text-shadow:0 2px 2px rgba(0,0,0,.45);">cocoon-service-worker.js</div>
<div class="t" style="left:23.8px;top:367.9px;font-family:'Liberation Sans','Noto Sans CJK JP',sans-serif;font-size:24px;font-weight:normal;color:#a5b0b3;letter-spacing:0.57px;text-shadow:0 2px 2px rgba(0,0,0,.4);">Getting Started</div>
<div class="t" style="left:44.0px;top:436.0px;font-family:'Liberation Sans','Noto Sans CJK JP',sans-serif;font-size:24px;font-weight:normal;color:#ffffff;letter-spacing:1.21px;text-shadow:0 2px 2px rgba(0,0,0,.4);">index<span style='color:#a5b0b3'>.html</span></div>
<div class="t" style="left:44.0px;top:482.0px;font-family:'Liberation Sans','Noto Sans CJK JP',sans-serif;font-size:24px;font-weight:normal;color:#ffffff;letter-spacing:0.37px;text-shadow:0 2px 2px rgba(0,0,0,.4);">main<span style='color:#a5b0b3'>.css</span></div>
<div class="t" style="left:44.0px;top:528.0px;font-family:'Liberation Sans','Noto Sans CJK JP',sans-serif;font-size:24px;font-weight:normal;color:#a5b0b3;letter-spacing:0.31px;text-shadow:0 2px 2px rgba(0,0,0,.4);">screenshots</div>
<div class="t" style="left:415.8px;top:1717.6px;font-family:'Liberation Sans','Noto Sans CJK JP',sans-serif;font-size:28px;font-weight:bold;color:#333333;letter-spacing:-0.33px;transform:scaleX(0.9);transform-origin:0 0;">2+</div>
<div class="t" style="left:451.4px;top:1716.8px;font-family:'Liberation Sans','Noto Sans CJK JP',sans-serif;font-size:28px;font-weight:bold;color:#333333;letter-spacing:-0.20px;">個の問題</div>
<div class="t" style="left:451.5px;top:1779.6px;font-family:'Liberation Sans','Noto Sans CJK JP',sans-serif;font-size:22px;font-weight:normal;color:#333333;letter-spacing:-0.08px;">JSLint (2)</div>
<div class="t" style="left:450.5px;top:1943.9px;font-family:'Liberation Sans','Noto Sans CJK JP',sans-serif;font-size:22px;font-weight:normal;color:#333333;letter-spacing:-0.22px;">ESLint (1)</div>
<div class="t" style="left:431.9px;top:1835.9px;font-family:'Liberation Sans','Noto Sans CJK JP',sans-serif;font-size:21px;font-weight:normal;color:#8a8a8a;letter-spacing:0.00px;">1</div>
<div class="t" style="left:431.9px;top:1890.0px;font-family:'Liberation Sans','Noto Sans CJK JP',sans-serif;font-size:21px;font-weight:normal;color:#8a8a8a;letter-spacing:0.00px;">1</div>
<div class="t" style="left:431.9px;top:2000.0px;font-family:'Liberation Sans','Noto Sans CJK JP',sans-serif;font-size:21px;font-weight:normal;color:#8a8a8a;letter-spacing:0.00px;">1</div>
<div class="t" style="left:524.4px;top:1835.9px;font-family:'Liberation Sans','Noto Sans CJK JP',sans-serif;font-size:22px;font-weight:normal;color:#333333;letter-spacing:0.26px;">Expected an identifier and instead saw &#39;const&#39;.</div>
<div class="t" style="left:524.4px;top:1890.0px;font-family:'Liberation Sans','Noto Sans CJK JP',sans-serif;font-size:22px;font-weight:normal;color:#333333;letter-spacing:0.18px;">Stopping. (1% scanned).</div>
<div class="t" style="left:524.4px;top:2000.0px;font-family:'Liberation Sans','Noto Sans CJK JP',sans-serif;font-size:22px;font-weight:normal;color:#333333;letter-spacing:-0.06px;">ERROR: Parsing error: The keyword &#39;const&#39; is reserved</div>
<div class="t" style="left:1079.8px;top:1835.9px;font-family:'Liberation Sans','Noto Sans CJK JP',sans-serif;font-size:22px;font-weight:normal;color:#333333;letter-spacing:-0.32px;">const CACHE_NAME = &#39;cocoon_20190523_20200313152846&#39;;</div>
<div class="t" style="left:1079.8px;top:1890.0px;font-family:'Liberation Sans','Noto Sans CJK JP',sans-serif;font-size:22px;font-weight:normal;color:#333333;letter-spacing:-0.32px;">const CACHE_NAME = &#39;cocoon_20190523_20200313152846&#39;;</div>
<div class="t" style="left:1079.8px;top:2000.0px;font-family:'Liberation Sans','Noto Sans CJK JP',sans-serif;font-size:22px;font-weight:normal;color:#333333;letter-spacing:-0.32px;">const CACHE_NAME = &#39;cocoon_20190523_20200313152846&#39;;</div>
<div class="t" style="left:419.8px;top:2064.0px;font-family:'Liberation Sans','Noto Sans CJK JP',sans-serif;font-size:20px;font-weight:normal;color:#333333;letter-spacing:-0.66px;"><span style='font-size:22px'>行</span> 29, <span style='font-size:22px'>列</span> 34<span style='color:#a3a3a3'> — 95 <span style='font-size:22px'>行</span></span></div>
<div class="t" style="left:2692.2px;top:2065.3px;font-family:'Liberation Sans','Noto Sans CJK JP',sans-serif;font-size:20px;font-weight:normal;color:#333333;letter-spacing:-0.50px;">INS</div>
<div class="t" style="left:2786.4px;top:2065.3px;font-family:'Liberation Sans','Noto Sans CJK JP',sans-serif;font-size:20px;font-weight:normal;color:#333333;letter-spacing:-0.35px;">UTF-8</div>
<div class="t" style="left:2926.0px;top:2065.3px;font-family:'Liberation Sans','Noto Sans CJK JP',sans-serif;font-size:20px;font-weight:normal;color:#333333;letter-spacing:0.22px;">JavaScript</div>
<div class="t" style="left:3154.0px;top:2064.3px;font-family:'Liberation Sans','Noto Sans CJK JP',sans-serif;font-size:20px;font-weight:normal;color:#333333;letter-spacing:-0.73px;"><span style='font-size:22px'>スペース<span style='position:relative;top:3px'>：</span></span> 4</div>
<div id="winborder"></div>
</div>
</body>
</html>
